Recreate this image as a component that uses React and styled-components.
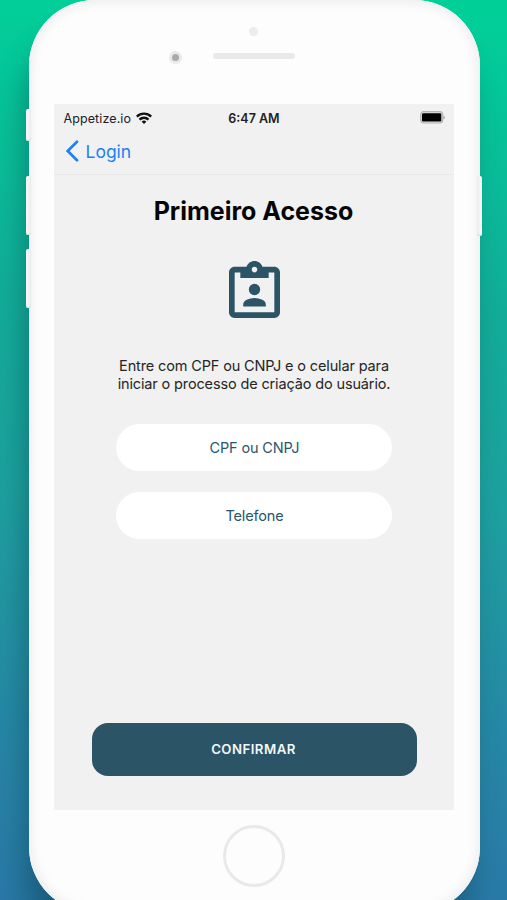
import React from "react";
import styled, { createGlobalStyle } from "styled-components";

const GlobalStyle = createGlobalStyle`
  * { box-sizing: border-box; }
  body { margin: 0; overflow: hidden; }
  button, input { font: inherit; border: 0; padding: 0; }
`;

const Backdrop = styled.main`
  width: 507px;
  height: 900px;
  overflow: hidden;
  display: flex;
  justify-content: center;
  align-items: flex-start;
  background: linear-gradient(182deg, #00d098 0%, #04c899 9%, #12ad99 34%, #1ea0a0 56%, #2688a6 80%, #2a78a8 100%);
  font-family: Inter, "Liberation Sans", sans-serif;
`;

const Phone = styled.div`
  position: relative;
  flex: none;
  width: 451px;
  height: 913px;
  margin-left: 1px;
  padding: 0 26px 0 25px;
  border-radius: 66px;
  background: #fdfdfd;
  display: flex;
  flex-direction: column;
  box-shadow: -7px 34px 30px -4px rgba(0, 55, 60, 0.42), inset 0 0 13px 1px rgba(0, 0, 0, 0.09),
    inset 0 0 1px 1px #fff;
`;

const SideButton = styled.span`
  position: absolute;
  ${({ $side }) => $side}: ${({ $side }) => ($side === "left" ? -3 : -2)}px;
  top: ${({ $top }) => $top}px;
  width: 5px;
  height: ${({ $height }) => $height}px;
  border-radius: 2px;
  background: linear-gradient(to ${({ $side }) => $side}, #ededed, #fafafa);
  box-shadow: inset 0 -1px 1px #d5dbd9;
`;

const Forehead = styled.div`
  flex: none;
  height: 104px;
  padding-top: 27px;
  display: flex;
  flex-direction: column;
  align-items: center;
  gap: 14px;
`;

const Sensor = styled.span`
  width: 9px;
  height: 9px;
  border-radius: 50%;
  background: #ececec;
`;

const EarpieceRow = styled.div`
  width: 168px;
  height: 14px;
  align-self: flex-start;
  margin: 0 0 0 115px;
  display: flex;
  align-items: center;
  gap: 37px;
`;

const Camera = styled.span`
  width: 13px;
  height: 13px;
  flex: none;
  border: 3px solid #e9e9e9;
  border-radius: 50%;
  background: #aaa;
`;

const Speaker = styled.span`
  width: 82px;
  height: 6px;
  margin-left: -6px;
  margin-top: -2px;
  border-radius: 3px;
  background: #e9e9e9;
`;

const Screen = styled.section`
  flex: none;
  width: 400px;
  height: 706px;
  background: #f1f1f1;
  display: flex;
  flex-direction: column;
`;

const StatusBar = styled.div`
  height: 28px;
  padding: 0 9px 0 10px;
  display: grid;
  grid-template-columns: 1fr auto 1fr;
  align-items: center;
  color: #222;
`;

const Carrier = styled.span`
  display: flex;
  align-items: center;
  gap: 5px;
  font-size: 12.5px;
  letter-spacing: 0.1px;
`;

const Clock = styled.time`
  font-size: 12.5px;
  font-weight: 600;
`;

const BatteryIcon = styled.svg`
  justify-self: end;
  margin-top: -1px;
`;

const NavBar = styled.nav`
  height: 43px;
  padding: 0 11px;
  display: flex;
  align-items: center;
  border-bottom: 1px solid #e9e9e9;
`;

const BackButton = styled.button`
  display: flex;
  align-items: center;
  gap: 7px;
  margin-top: -4px;
  background: none;
  color: #1b82f3;
  font-size: 17.5px;
`;

const Content = styled.div`
  flex: 1;
  display: flex;
  flex-direction: column;
  align-items: center;
`;

const Title = styled.h1`
  margin: 20px 0 0;
  color: #050505;
  font-size: 25px;
  line-height: 32px;
  font-weight: 700;
`;

const BadgeIcon = styled.svg`
  margin: 34px 0 0 1px;
`;

const Instructions = styled.p`
  margin: 39px 0 31px 1px;
  color: #252525;
  font-size: 14.5px;
  line-height: 18px;
  letter-spacing: -0.14px;
  text-align: center;
  white-space: nowrap;
`;

const Field = styled.input`
  width: 276px;
  height: 47px;
  margin: 0 0 21px 1px;
  padding-left: 1px;
  border-radius: 24px;
  background: #fff;
  color: #2a566b;
  font-size: 14.5px;
  letter-spacing: -0.14px;
  text-align: center;
  outline: none;
  &::placeholder { color: #2a566b; opacity: 1; }
`;

const ConfirmButton = styled.button`
  width: 325px;
  height: 53px;
  margin: auto 0 34px 1px;
  padding: 0 1px 2px 0;
  border-radius: 16px;
  background: #2b5467;
  color: #f3f8fa;
  font-size: 13.25px;
  font-weight: 600;
  letter-spacing: 0.45px;
`;

const Chin = styled.div`
  flex: 1;
  display: flex;
  justify-content: center;
  align-items: flex-start;
  padding-top: 15px;
`;

const HomeButton = styled.span`
  width: 62px;
  height: 62px;
  border: 3px solid #e9e9e9;
  border-radius: 50%;
`;

const sideButtons = [
  { side: "left", top: 109, height: 32 },
  { side: "left", top: 176, height: 59 },
  { side: "left", top: 249, height: 59 },
  { side: "right", top: 176, height: 60 },
];

export default function App() {
  return (
    <>
      <GlobalStyle />
      <Backdrop>
        <Phone>
          {sideButtons.map(({ side, top, height }) => (
            <SideButton key={side + top} $side={side} $top={top} $height={height} />
          ))}
          <Forehead>
            <Sensor />
            <EarpieceRow>
              <Camera />
              <Speaker />
            </EarpieceRow>
          </Forehead>
          <Screen>
            <StatusBar>
              <Carrier>
                Appetize.io
                <svg width="16" height="12" viewBox="0 0 16 12" fill="none" stroke="#111" strokeWidth="2.4">
                  <path d="M.8 4.600a10.300 10.300 0 0 1 14.400 0" />
                  <path d="M3.500 7.600a6.300 6.300 0 0 1 9 0" />
                  <path d="M8 11.900 5.700 9.700a3.200 3.200 0 0 1 4.600 0Z" fill="#111" stroke="none" />
                </svg>
              </Carrier>
              <Clock>6:47 AM</Clock>
              <BatteryIcon width="25" height="13" viewBox="0 0 25 13">
                <rect x="0.7" y="0.7" width="22" height="11.3" rx="3" fill="#dedede" stroke="#b4b4b4" strokeWidth="1.2" />
                <rect x="2" y="2.3" width="19.3" height="8.2" rx="1.2" fill="#000" />
                <path d="M23.5 4.5c1.6.5 1.6 3.300 0 3.800Z" fill="#999" />
              </BatteryIcon>
            </StatusBar>
            <NavBar>
              <BackButton>
                <svg width="14" height="22" viewBox="0 0 14 22" fill="none" stroke="#1b82f3" strokeWidth="2.7" strokeLinecap="round" strokeLinejoin="miter">
                  <path d="M12 1.700 2.700 11 12 20.300" />
                </svg>
                Login
              </BackButton>
            </NavBar>
            <Content>
              <Title>Primeiro Acesso</Title>
              <BadgeIcon width="51" height="57" viewBox="3 1 18 20" preserveAspectRatio="none" fill="#2b5467">
                <path d="M19 3h-4.180C14.400 1.840 13.300 1 12 1s-2.400.840-2.820 2H5c-1.100 0-2 .900-2 2v14c0 1.100.900 2 2 2h14c1.100 0 2-.900 2-2V5c0-1.100-.900-2-2-2zm-7 0c.550 0 1 .450 1 1s-.450 1-1 1-1-.450-1-1 .450-1 1-1zm7 16H5V5h2v2h10V5h2z" />
                <circle cx="12" cy="11" r="2" />
                <path d="M16 17H8v-.570c0-.810.480-1.530 1.220-1.850a6.950 6.950 0 0 1 5.560 0A2.010 2.010 0 0 1 16 16.430z" />
              </BadgeIcon>
              <Instructions>
                Entre com CPF ou CNPJ e o celular para
                <br />
                iniciar o processo de criação do usuário.
              </Instructions>
              <Field placeholder="CPF ou CNPJ" aria-label="CPF ou CNPJ" />
              <Field placeholder="Telefone" aria-label="Telefone" />
              <ConfirmButton>CONFIRMAR</ConfirmButton>
            </Content>
          </Screen>
          <Chin>
            <HomeButton />
          </Chin>
        </Phone>
      </Backdrop>
    </>
  );
}
